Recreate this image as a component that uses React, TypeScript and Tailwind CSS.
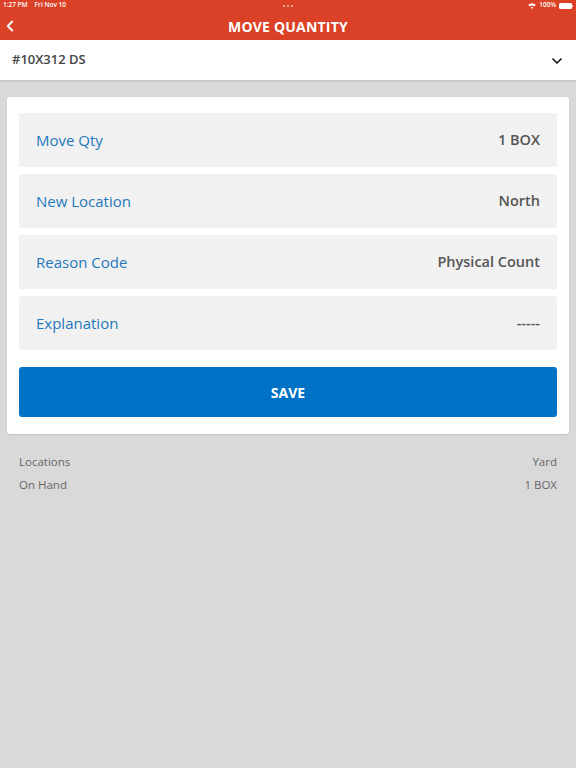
import { ChevronLeft, ChevronDown } from "lucide-react";

const rows = [
  { label: "Move Qty", value: "1 BOX" },
  { label: "New Location", value: "North" },
  { label: "Reason Code", value: "Physical Count" },
  { label: "Explanation", value: "-----" },
];

const info = [
  { label: "Locations", value: "Yard" },
  { label: "On Hand", value: "1 BOX" },
];

export default function App() {
  return (
    <div className="flex h-[768px] w-[576px] flex-col bg-[#d9d9d9] font-['Open_Sans',sans-serif]">
      {/* header */}
      <div className="flex h-10 shrink-0 flex-col bg-[#da4127] text-white">
        <div className="flex h-[11px] items-center justify-between px-[3px] text-[6.5px] font-semibold leading-none">
          <div className="flex w-24 gap-[7px]">
            <span>1:27 PM</span>
            <span>Fri Nov 10</span>
          </div>
          <div className="flex gap-[2px] opacity-70">
            <span className="h-[2px] w-[2px] rounded-full bg-white" />
            <span className="h-[2px] w-[2px] rounded-full bg-white" />
            <span className="h-[2px] w-[2px] rounded-full bg-white" />
          </div>
          <div className="flex w-24 items-center justify-end gap-[3px]">
            <svg width="8" height="6" viewBox="0 0 16 12" fill="white">
              <path d="M8 12 5.5 9.2a3.6 3.6 0 0 1 5 0ZM3.7 7.2a6.4 6.4 0 0 1 8.6 0l1.5-1.7a8.7 8.7 0 0 0-11.6 0ZM.5 3.6 2 5.3a9.5 9.5 0 0 1 12 0l1.5-1.7a11.8 11.8 0 0 0-15 0Z" />
            </svg>
            <span>100%</span>
            <span className="flex items-center">
              <span className="h-[6px] w-[13px] rounded-[1.5px] bg-white" />
              <span className="h-[2px] w-[1px] bg-white/70" />
            </span>
          </div>
        </div>
        <div className="relative flex flex-1 items-center justify-center">
          <ChevronLeft size={18} strokeWidth={2.5} className="absolute left-[1px] top-[6px]" />
          <span className="pt-[1px] text-[14px] font-bold tracking-[0.2px]">MOVE QUANTITY</span>
        </div>
      </div>

      {/* item selector */}
      <div className="flex h-10 shrink-0 items-center justify-between bg-white pl-[12px] pr-[11px] shadow-[0_1px_2px_rgba(0,0,0,0.12)]">
        <span className="text-[13px] font-semibold text-[#444]">#10X312 DS</span>
        <ChevronDown size={16} strokeWidth={2.5} className="mt-[1px] text-[#111]" />
      </div>

      {/* form card */}
      <div className="mx-[7px] mt-[17px] flex flex-col gap-[7px] rounded-[3px] bg-white px-[12px] pb-[17px] pt-[16px] shadow-[0_1px_2px_rgba(0,0,0,0.1)]">
        {rows.map((r) => (
          <div
            key={r.label}
            className="flex h-[54px] items-center justify-between rounded-[2px] bg-[#f1f1f1] px-[17px]"
          >
            <span className="text-[15px] text-[#1f78bd]">{r.label}</span>
            <span className="text-[14.5px] font-semibold text-[#555]">{r.value}</span>
          </div>
        ))}
        <button className="mt-[10px] flex h-[50px] items-center justify-center rounded-[3px] bg-[#0072c6] text-[14px] font-bold text-white">
          SAVE
        </button>
      </div>

      {/* info */}
      <div className="mt-[20px] flex flex-col gap-[8px] px-[19px] text-[11.5px] text-[#666]">
        {info.map((i) => (
          <div key={i.label} className="flex justify-between leading-[15px]">
            <span>{i.label}</span>
            <span>{i.value}</span>
          </div>
        ))}
      </div>
    </div>
  );
}
